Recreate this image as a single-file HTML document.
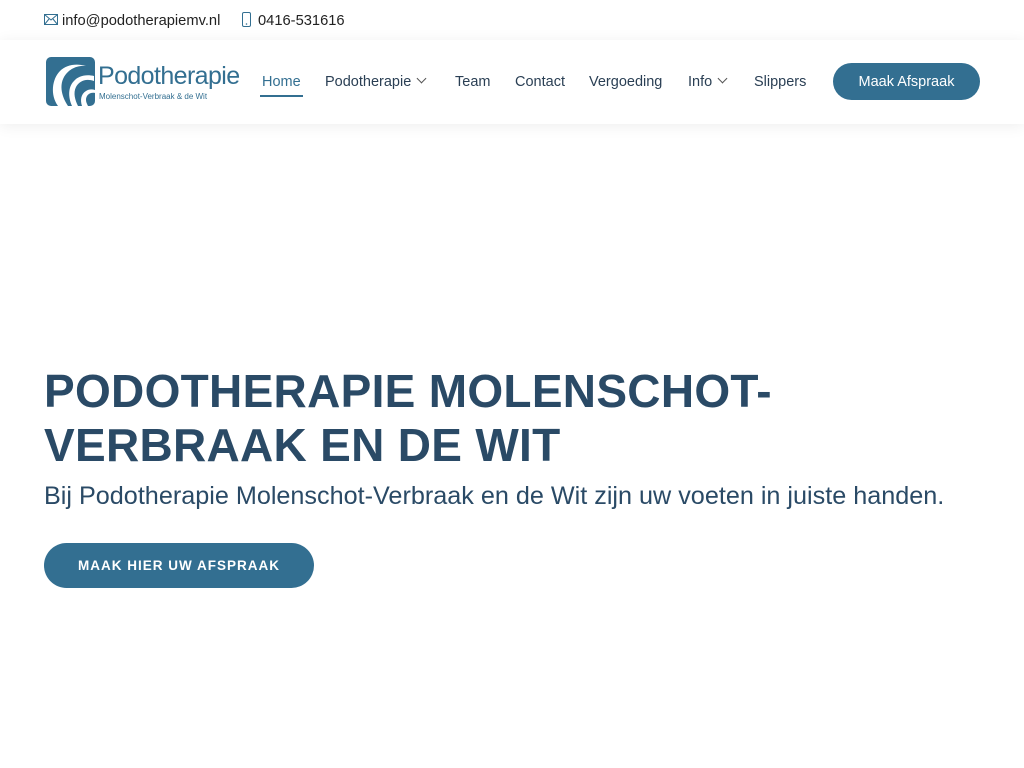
<!DOCTYPE html>
<html><head><meta charset="utf-8"><style>
*{margin:0;padding:0;box-sizing:border-box}
body{width:1024px;height:768px;background:#fff;font-family:"Liberation Sans",sans-serif;overflow:hidden;position:relative}
.top{height:40px;position:relative;font-size:14.7px;color:#222}
.top span{position:absolute;top:13px}
.hdr{position:absolute;top:40px;left:0;width:1024px;height:84px;background:#fff;box-shadow:0 2px 14px rgba(0,0,0,0.07)}
.logo{position:absolute;left:46px;top:17px;width:49px;height:49px;background:#336f91;border-radius:5px;overflow:hidden}
.lt{position:absolute;left:98px;top:22px;font-size:25px;color:#336f91;letter-spacing:-0.6px}
.ls{position:absolute;left:99px;top:52px;font-size:8px;color:#336f91}
.nav a{position:absolute;top:34px;font-size:14.5px;color:#2a3f54;text-decoration:none}
.btn{position:absolute;left:833px;top:23px;width:147px;height:37px;background:#336f91;border-radius:19px;color:#fff;font-size:14.5px;text-align:center;line-height:39px}
h1{position:absolute;left:44px;top:364px;font-size:46px;line-height:54px;color:#2a4a66;font-weight:bold;letter-spacing:0.3px}
.sub{position:absolute;left:44px;top:482px;font-size:25.2px;color:#2a4a66}
.cta{position:absolute;left:44px;top:543px;width:270px;height:45px;background:#336f91;border-radius:23px;color:#fff;font-size:13.5px;font-weight:bold;letter-spacing:1px;text-align:center;line-height:45px}
.chev{display:inline-block;width:7px;height:7px;border-right:1px solid #555;border-bottom:1px solid #555;transform:rotate(45deg);margin-left:7px;position:relative;top:-4px}
</style></head><body>
<div class="top">
<svg style="position:absolute;left:44px;top:14px" width="14" height="11" viewBox="0 0 14 11"><rect x="0.5" y="0.5" width="13" height="10" fill="none" stroke="#336f91"/><path d="M0.5 0.5L7 6L13.5 0.5M0.5 10.5L5 5M13.5 10.5L9 5" fill="none" stroke="#336f91"/></svg>
<span style="left:62px">info@podotherapiemv.nl</span>
<svg style="position:absolute;left:242px;top:12px" width="9" height="15" viewBox="0 0 9 15"><rect x="0.5" y="0.5" width="8" height="14" rx="1.5" fill="none" stroke="#336f91"/><circle cx="4.5" cy="12" r="0.8" fill="#336f91"/></svg>
<span style="left:258px">0416-531616</span>
</div>
<div class="hdr">
<div class="logo"><svg width="49" height="49" viewBox="0 0 49 49"><path d="M12 49C4 38 6 22 14 14C20 8 30 6 40 9C30 8 22 13 18 20C13 29 16 40 22 49Z" fill="#fff"/><path d="M26 49C22 40 22 30 28 24C32 19 40 17 48 19L48 24C40 21 33 24 30 30C27 36 29 43 32 49Z" fill="#fff"/><path d="M36 49C34 43 35 37 40 34C43 32 46 32 49 33L49 36C44 35 40 38 40 43C40 45 41 47 42 49Z" fill="#fff"/></svg></div>
<div class="lt">Podotherapie</div>
<div class="ls">Molenschot-Verbraak &amp; de Wit</div>
<div class="nav">
<a style="left:262px;color:#336f91">Home</a>
<div style="position:absolute;left:260px;top:55px;width:43px;height:2px;background:#336f91"></div>
<a style="left:325px">Podotherapie<i class="chev"></i></a>
<a style="left:455px">Team</a>
<a style="left:515px">Contact</a>
<a style="left:589px">Vergoeding</a>
<a style="left:688px">Info<i class="chev"></i></a>
<a style="left:754px">Slippers</a>
</div>
<div class="btn">Maak Afspraak</div>
</div>
<h1>PODOTHERAPIE MOLENSCHOT-<br>VERBRAAK EN DE WIT</h1>
<div class="sub">Bij Podotherapie Molenschot-Verbraak en de Wit zijn uw voeten in juiste handen.</div>
<div class="cta">MAAK HIER UW AFSPRAAK</div>
</body></html>
